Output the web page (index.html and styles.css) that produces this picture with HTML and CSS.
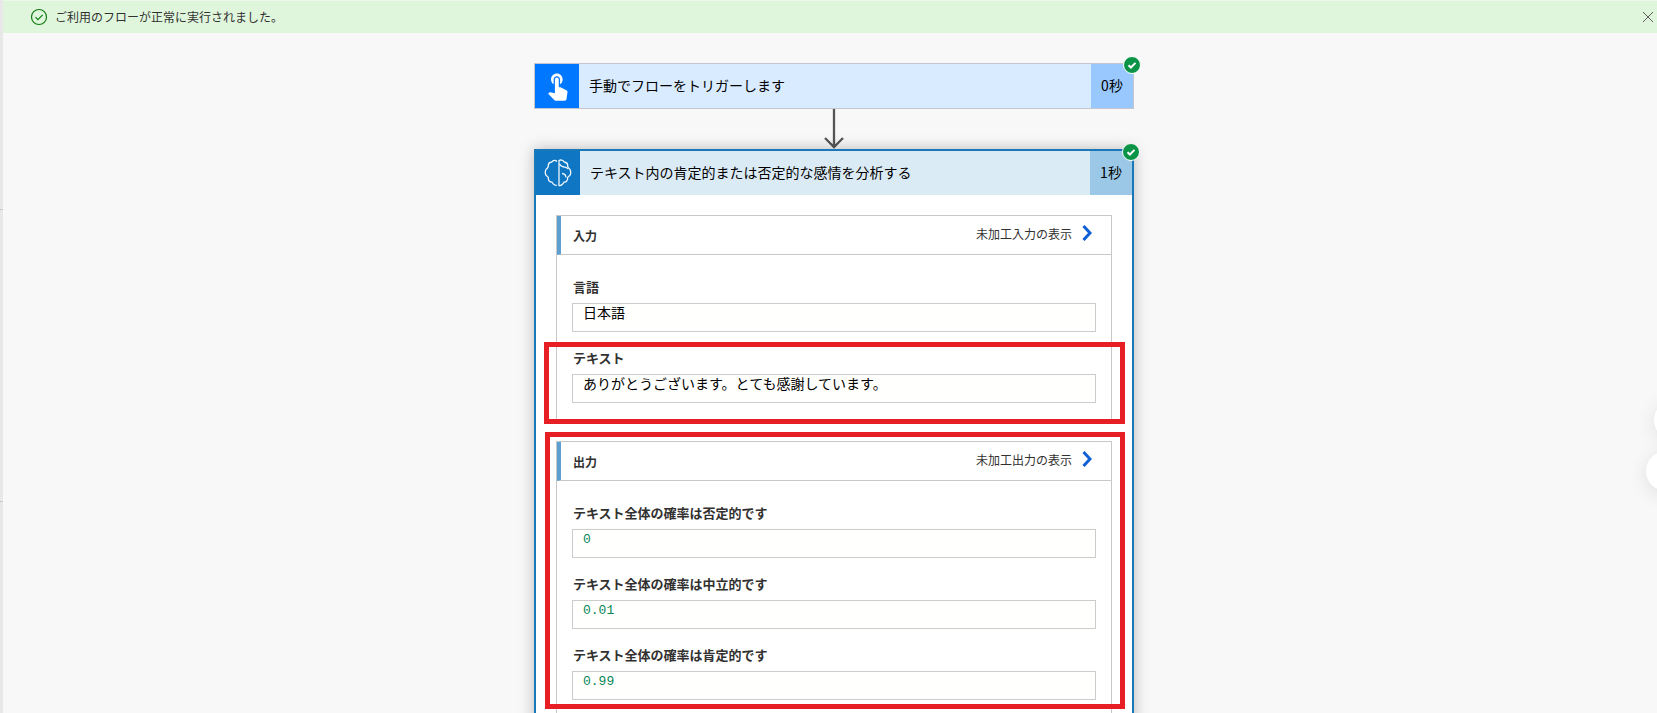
FILE: index.html
```html
<!DOCTYPE html>
<html lang="ja">
<head>
    <meta charset="UTF-8">
    <meta name="viewport" content="width=device-width, initial-scale=1.0">
    <title>フローの実行</title>
    <link rel="stylesheet" href="styles.css">
</head>
<body>
    <div class="side-rail"></div>
    <div class="page">
        <div class="banner" role="status">
            <svg class="banner-icon" viewBox="0 0 18 18" aria-hidden="true">
                <circle cx="9" cy="9" r="7.5"/>
                <path d="M5.5 9.2l2.4 2.4 4.8-4.8"/>
            </svg>
            <span class="banner-text">ご利用のフローが正常に実行されました。</span>
            <button class="banner-close" type="button" aria-label="閉じる">
                <svg viewBox="0 0 12 12" aria-hidden="true"><path d="M1 1l10 10M11 1L1 11"/></svg>
            </button>
        </div>

        <main class="flow">
            <section class="card card-trigger">
                <header class="card-header">
                    <span class="card-icon">
                        <svg class="icon-touch" viewBox="0 1 24 24" aria-hidden="true">
                            <path d="M9 11.24V7.5C9 6.12 10.12 5 11.5 5S14 6.12 14 7.5v3.74c1.21-.81 2-2.18 2-3.74C16 5.01 13.99 3 11.5 3S7 5.01 7 7.5c0 1.56.79 2.93 2 3.74zm9.84 4.63l-4.54-2.26c-.17-.07-.35-.11-.54-.11H13v-6c0-.83-.67-1.5-1.5-1.5S10 6.67 10 7.5v10.74l-3.43-.72c-.08-.01-.15-.03-.24-.03-.31 0-.59.13-.79.33l-.79.8 4.94 4.94c.27.27.65.44 1.06.44h6.79c.75 0 1.33-.55 1.44-1.28l.75-5.27c.01-.07.02-.14.02-.21 0-.62-.38-1.16-.91-1.38z"/>
                        </svg>
                    </span>
                    <span class="card-title">手動でフローをトリガーします</span>
                    <span class="card-time">0秒</span>
                </header>
                <svg class="badge" viewBox="0 0 18 18" role="img" aria-label="成功">
                    <circle cx="9" cy="9" r="8.5"/>
                    <path d="M5.5 9.2l2.4 2.3 4.6-4.6"/>
                </svg>
            </section>

            <svg class="arrow" viewBox="0 0 22 40" aria-hidden="true"><path d="M11 0v38M2 29l9 9 9-9"/></svg>

            <section class="card card-action">
                <header class="card-header">
                    <span class="card-icon">
                        <svg class="icon-brain" viewBox="0 0 28 28" aria-hidden="true">
                            <path d="M13 2.500C11.500.8 9 .8 7.800 3 5.500 3.300 4 5 4.300 7.500 3.800 9 3 9.600 2 10.500 1 12 1 15 2.200 16.500c.8.800 2 1.200 2.200 2.200-.4 2.500 1.100 4.300 3.600 4.500C9.500 25.800 11.500 26.800 13 26"/>
                            <path d="M15 1.500V26.500c1.500.300 3.600-.8 5-3.300 2.500-.200 4-2 3.600-4.500.2-1 1.400-1.400 2.200-2.200C27 15 27 12 26 10.500c-1-.900-1.800-1.500-2.300-3C24 5 22.500 3.300 20.200 3 19 1 16.500.5 15 1.500z"/>
                            <path d="M15.500 5c1.500 2.500 3.500 3 5.500 3.200 1.500.2 2.300.8 3 1.800M18 14.500c2.500.2 3.800 1.500 4 4"/>
                        </svg>
                    </span>
                    <span class="card-title">テキスト内の肯定的または否定的な感情を分析する</span>
                    <span class="card-time">1秒</span>
                </header>
                <svg class="badge" viewBox="0 0 18 18" role="img" aria-label="成功">
                    <circle cx="9" cy="9" r="8.5"/>
                    <path d="M5.5 9.2l2.4 2.3 4.6-4.6"/>
                </svg>

                <div class="card-body">
                    <div class="panel">
                        <div class="panel-header">
                            <h2>入力</h2>
                            <a href="#">未加工入力の表示
                                <svg viewBox="0 0 10 16" aria-hidden="true"><path d="M1.5 1l6.5 7-6.5 7"/></svg>
                            </a>
                        </div>
                        <div class="field">
                            <label for="language">言語</label>
                            <input type="text" id="language" value="日本語" readonly>
                        </div>
                        <div class="field">
                            <label for="text">テキスト</label>
                            <input type="text" id="text" value="ありがとうございます。とても感謝しています。" readonly>
                            <div class="mark mark-text"></div>
                        </div>
                    </div>

                    <div class="panel">
                        <div class="panel-header">
                            <h2>出力</h2>
                            <a href="#">未加工出力の表示
                                <svg viewBox="0 0 10 16" aria-hidden="true"><path d="M1.5 1l6.5 7-6.5 7"/></svg>
                            </a>
                        </div>
                        <div class="field">
                            <label for="negative">テキスト全体の確率は否定的です</label>
                            <input class="number" type="text" id="negative" value="0" readonly>
                        </div>
                        <div class="field">
                            <label for="neutral">テキスト全体の確率は中立的です</label>
                            <input class="number" type="text" id="neutral" value="0.01" readonly>
                        </div>
                        <div class="field">
                            <label for="positive">テキスト全体の確率は肯定的です</label>
                            <input class="number" type="text" id="positive" value="0.99" readonly>
                        </div>
                        <div class="mark mark-output"></div>
                    </div>
                </div>
            </section>
        </main>
    </div>
    <div class="bubble bubble-small"></div>
    <div class="bubble bubble-large"></div>
</body>
</html>
```
FILE: styles.css
```css
* {
    box-sizing: border-box;
}
body {
    position: relative;
    display: flex;
    height: 100vh;
    margin: 0;
    overflow: hidden;
    background-color: #f8f8f8;
    color: #000;
    font-family: "Noto Sans CJK JP", sans-serif;
    font-size: 14px;
}
svg {
    display: block;
    fill: none;
}

/* edge of the collapsed navigation */
.side-rail {
    width: 3px;
    background: linear-gradient(#c8c8c8, #c8c8c8) 0 209px / 3px 1px no-repeat,
                linear-gradient(#c8c8c8, #c8c8c8) 0 501px / 3px 1px no-repeat,
                #e8e8e8;
}
.page {
    flex: 1;
    min-width: 0;
}

/* success banner */
.banner {
    display: flex;
    align-items: center;
    gap: 7px;
    height: 33px;
    padding: 0 3px 0 27px;
    border-top: 1px solid #ecf8ea;
    background-color: #dff6dd;
    color: #323130;
    font-size: 12px;
}
.banner-icon {
    width: 18px;
    height: 18px;
    stroke: #107c10;
    stroke-width: 1.2;
}
.banner-text {
    padding-bottom: 2px;
}
.banner-close {
    margin-left: auto;
    padding: 0;
    border: none;
    background: none;
    cursor: pointer;
}
.banner-close svg {
    width: 12px;
    height: 12px;
    stroke: #605e5c;
}

/* flow */
.flow {
    display: flex;
    flex-direction: column;
    align-items: center;
    padding: 30px 0 0 8px;
}
.card {
    position: relative;
    width: 600px;
    max-width: 100%;
    background-color: #fff;
}
.card-trigger {
    border: 1px solid #c3c6cc;
}
.card-action {
    border: 2px solid #1a78b8;
    box-shadow: 0 0 14px rgba(0, 0, 0, 0.25);
}
.card-header {
    display: flex;
    height: 44px;
    line-height: 42px;
}
.card-icon {
    display: grid;
    place-items: center;
    width: 44px;
}
.card-title {
    flex: 1;
    padding-left: 10px;
}
.card-time {
    width: 42px;
    text-align: center;
}
.card-trigger .card-header {
    background-color: #d9ebff;
}
.card-trigger .card-icon {
    background-color: #0077ff;
}
.card-trigger .card-time {
    background-color: #99c8ff;
}
.card-action .card-header {
    background-color: #dbebf5;
}
.card-action .card-icon {
    background-color: #0f76c4;
}
.card-action .card-time {
    background-color: #9bc8e7;
}
.icon-touch {
    width: 31px;
    height: 31px;
    fill: #fff;
}
.icon-brain {
    width: 28px;
    height: 28px;
    stroke: #f0f8fd;
    stroke-width: 1.3;
}
.badge {
    position: absolute;
    top: -8px;
    right: -8px;
    width: 18px;
    height: 18px;
    stroke: #fff;
}
.badge circle {
    fill: #0b9447;
}
.badge path {
    stroke-width: 2;
}
.arrow {
    width: 22px;
    height: 40px;
    stroke: #555;
    stroke-width: 2.3;
}

/* inputs and outputs */
.card-body {
    display: flex;
    flex-direction: column;
    gap: 20px;
    padding: 20px;
}
.panel {
    position: relative;
    padding-bottom: 3px;
    border: 1px solid #c8c8c8;
}
.panel-header {
    display: flex;
    align-items: center;
    justify-content: space-between;
    height: 39px;
    margin-bottom: 20px;
    padding: 0 19px 0 12px;
    border-bottom: 1px solid #c8c8c8;
    border-left: 4px solid #5c9fd0;
    color: #323130;
    font-size: 12px;
}
.panel-header h2 {
    margin: 0;
    font-size: 12px;
}
.panel-header a {
    display: flex;
    align-items: center;
    gap: 10px;
    padding-bottom: 4px;
    color: #323130;
    text-decoration: none;
}
.panel-header svg {
    width: 10px;
    height: 16px;
    stroke: #0f5fd7;
    stroke-width: 3;
}
.field {
    position: relative;
    margin: 0 15px 14px;
}
.field label {
    display: block;
    margin-bottom: 4px;
    padding-left: 1px;
    color: #323130;
    font-size: 13px;
    font-weight: bold;
    line-height: 24px;
}
.field input {
    display: block;
    width: 100%;
    height: 29px;
    padding: 0 10px 11px;
    border: 1px solid #ccc;
    border-radius: 0;
    background-color: #fffffd;
    color: #000;
    font-family: inherit;
    font-size: 14px;
    line-height: 16px;
}
.field .number {
    padding-bottom: 8px;
    color: #098658;
    font-family: "Liberation Mono", monospace;
    font-size: 13px;
}

/* red callout frames */
.mark {
    position: absolute;
    border: 5px solid #e81e25;
    pointer-events: none;
}
.mark-text {
    inset: -4px -29px -21px -28px;
}
.mark-output {
    inset: -10px -14px 8px -12px;
}

/* floating buttons past the right edge */
.bubble {
    position: absolute;
    width: 40px;
    height: 40px;
    border-radius: 50%;
    background-color: #fff;
    box-shadow: 0 4px 20px rgba(0, 0, 0, 0.1);
}
.bubble-small {
    top: 400px;
    right: -37px;
}
.bubble-large {
    top: 451px;
    right: -29px;
}
```
